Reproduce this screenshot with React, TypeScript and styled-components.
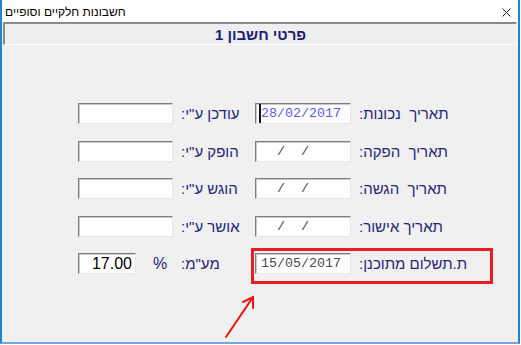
import React from "react";
import styled, { createGlobalStyle } from "styled-components";

const Global = createGlobalStyle`
  html, body { margin: 0; padding: 0; background: #ffffff; }
  body { font-family: "Liberation Sans", Arial, sans-serif; }
`;

const Window = styled.div`
  position: relative;
  box-sizing: border-box;
  width: 520px;
  height: 344px;
  background: #f0f0f0;
  border-left: 2px solid #1a84d8;
  border-right: 2px solid #1a84d8;
  border-bottom: 2px solid #74a9dc;
  display: flex;
  flex-direction: column;
`;

const TitleBar = styled.div`
  height: 22px;
  background: #ffffff;
  display: flex;
  align-items: center;
  justify-content: space-between;
  padding: 2px 7px 0 3px;
  box-sizing: border-box;
  font-size: 12px;
  color: #000;
`;

const TitleText = styled.span`
  direction: rtl;
`;

const Header = styled.div`
  margin: 0 1px;
  height: 23px;
  box-sizing: border-box;
  border-top: 2px solid #8a8a8a;
  border-left: 2px solid #8a8a8a;
  border-bottom: 1px solid #fbfbfb;
  border-right: 1px solid #fbfbfb;
  background: #efefef;
  display: flex;
  align-items: center;
  justify-content: center;
  font-size: 15px;
  font-weight: bold;
  color: #1c1c74;
  direction: rtl;
`;

const Body = styled.div`
  flex: 1;
  display: flex;
  flex-direction: column;
  gap: 16.5px;
  padding: 58px 0 0 76px;
`;

const Row = styled.div`
  display: flex;
  align-items: center;
  height: 21px;
`;

const Field = styled.div<{ $w: number }>`
  box-sizing: border-box;
  width: ${(p) => p.$w}px;
  height: 21px;
  background: #ffffff;
  border-top: 1px solid #7e7e7e;
  border-left: 1px solid #7e7e7e;
  border-bottom: 1px solid #e6e6e6;
  border-right: 1px solid #e6e6e6;
  box-shadow: inset 1px 1px 0 #c9c9c9;
  display: flex;
  align-items: center;
`;

const DateField = styled(Field)<{ $color?: string; $caret?: boolean }>`
  padding-left: ${(p) => (p.$caret ? 3 : 5)}px;
  font-family: "Liberation Mono", "Courier New", monospace;
  font-size: 13.34px;
  color: ${(p) => p.$color || "#4a4a4a"};
  white-space: pre;
`;

const Caret = styled.span`
  display: inline-block;
  width: 2px;
  height: 19px;
  background: #111;
`;

const NumField = styled(Field)`
  justify-content: flex-end;
  padding-right: 3px;
  font-size: 16px;
  color: #000;
`;

const Label = styled.span<{ $w?: number; $ml?: number }>`
  width: ${(p) => (p.$w ? `${p.$w}px` : "auto")};
  margin-left: ${(p) => p.$ml ?? 8}px;
  direction: rtl;
  text-align: left;
  font-size: 15px;
  color: #25257e;
  white-space: pre;
`;

const Percent = styled.span`
  width: 28px;
  margin-left: 17px;
  font-size: 16px;
  color: #25257e;
`;

const Highlight = styled.div`
  position: absolute;
  left: 249px;
  top: 248px;
  width: 242px;
  height: 36px;
  box-sizing: border-box;
  border: 3px solid #ec1c24;
  pointer-events: none;
`;

const Arrow = styled.svg`
  position: absolute;
  left: 0;
  top: 0;
  pointer-events: none;
`;

const rows = [
  { left: "עודכן ע\"י:", date: "28/02/2017", right: "תאריך  נכונות:", first: true },
  { left: "הופק ע\"י:", date: "  /  /", right: "תאריך  הפקה:" },
  { left: "הוגש ע\"י:", date: "  /  /", right: "תאריך  הגשה:" },
  { left: "אושר ע\"י:", date: "  /  /", right: "תאריך אישור:" },
];

export default function App() {
  return (
    <>
      <Global />
      <Window>
        <TitleBar>
          <TitleText>חשבונות חלקיים וסופיים</TitleText>
          <svg width="9" height="9" viewBox="0 0 9 9">
            <path d="M0.5 0.5 L8.5 8.5 M8.5 0.5 L0.5 8.5" stroke="#222" strokeWidth="1" />
          </svg>
        </TitleBar>
        <Header>פרטי חשבון 1</Header>
        <Body>
          {rows.map((r, i) => (
            <Row key={i}>
              <Field $w={95} />
              <Label $w={74}>{r.left}</Label>
              {r.first ? (
                <DateField $w={96} $color="#5a5af5" $caret>
                  <Caret />
                  {r.date}
                </DateField>
              ) : (
                <DateField $w={96}>{r.date}</DateField>
              )}
              <Label>{r.right}</Label>
            </Row>
          ))}
          <Row>
            <NumField $w={58}>17.00</NumField>
            <Percent>%</Percent>
            <Label $w={74} $ml={0}>מע"מ:</Label>
            <DateField $w={96}>15/05/2017</DateField>
            <Label>ת.תשלום מתוכנן:</Label>
          </Row>
        </Body>
        <Highlight />
        <Arrow width="520" height="344" viewBox="0 0 520 344">
          <g stroke="#ee1111" strokeWidth="2" fill="none" strokeLinecap="round">
            <path d="M224 337 L251 297" />
            <path d="M241 302 L251 297 L251 308" />
          </g>
        </Arrow>
      </Window>
    </>
  );
}
